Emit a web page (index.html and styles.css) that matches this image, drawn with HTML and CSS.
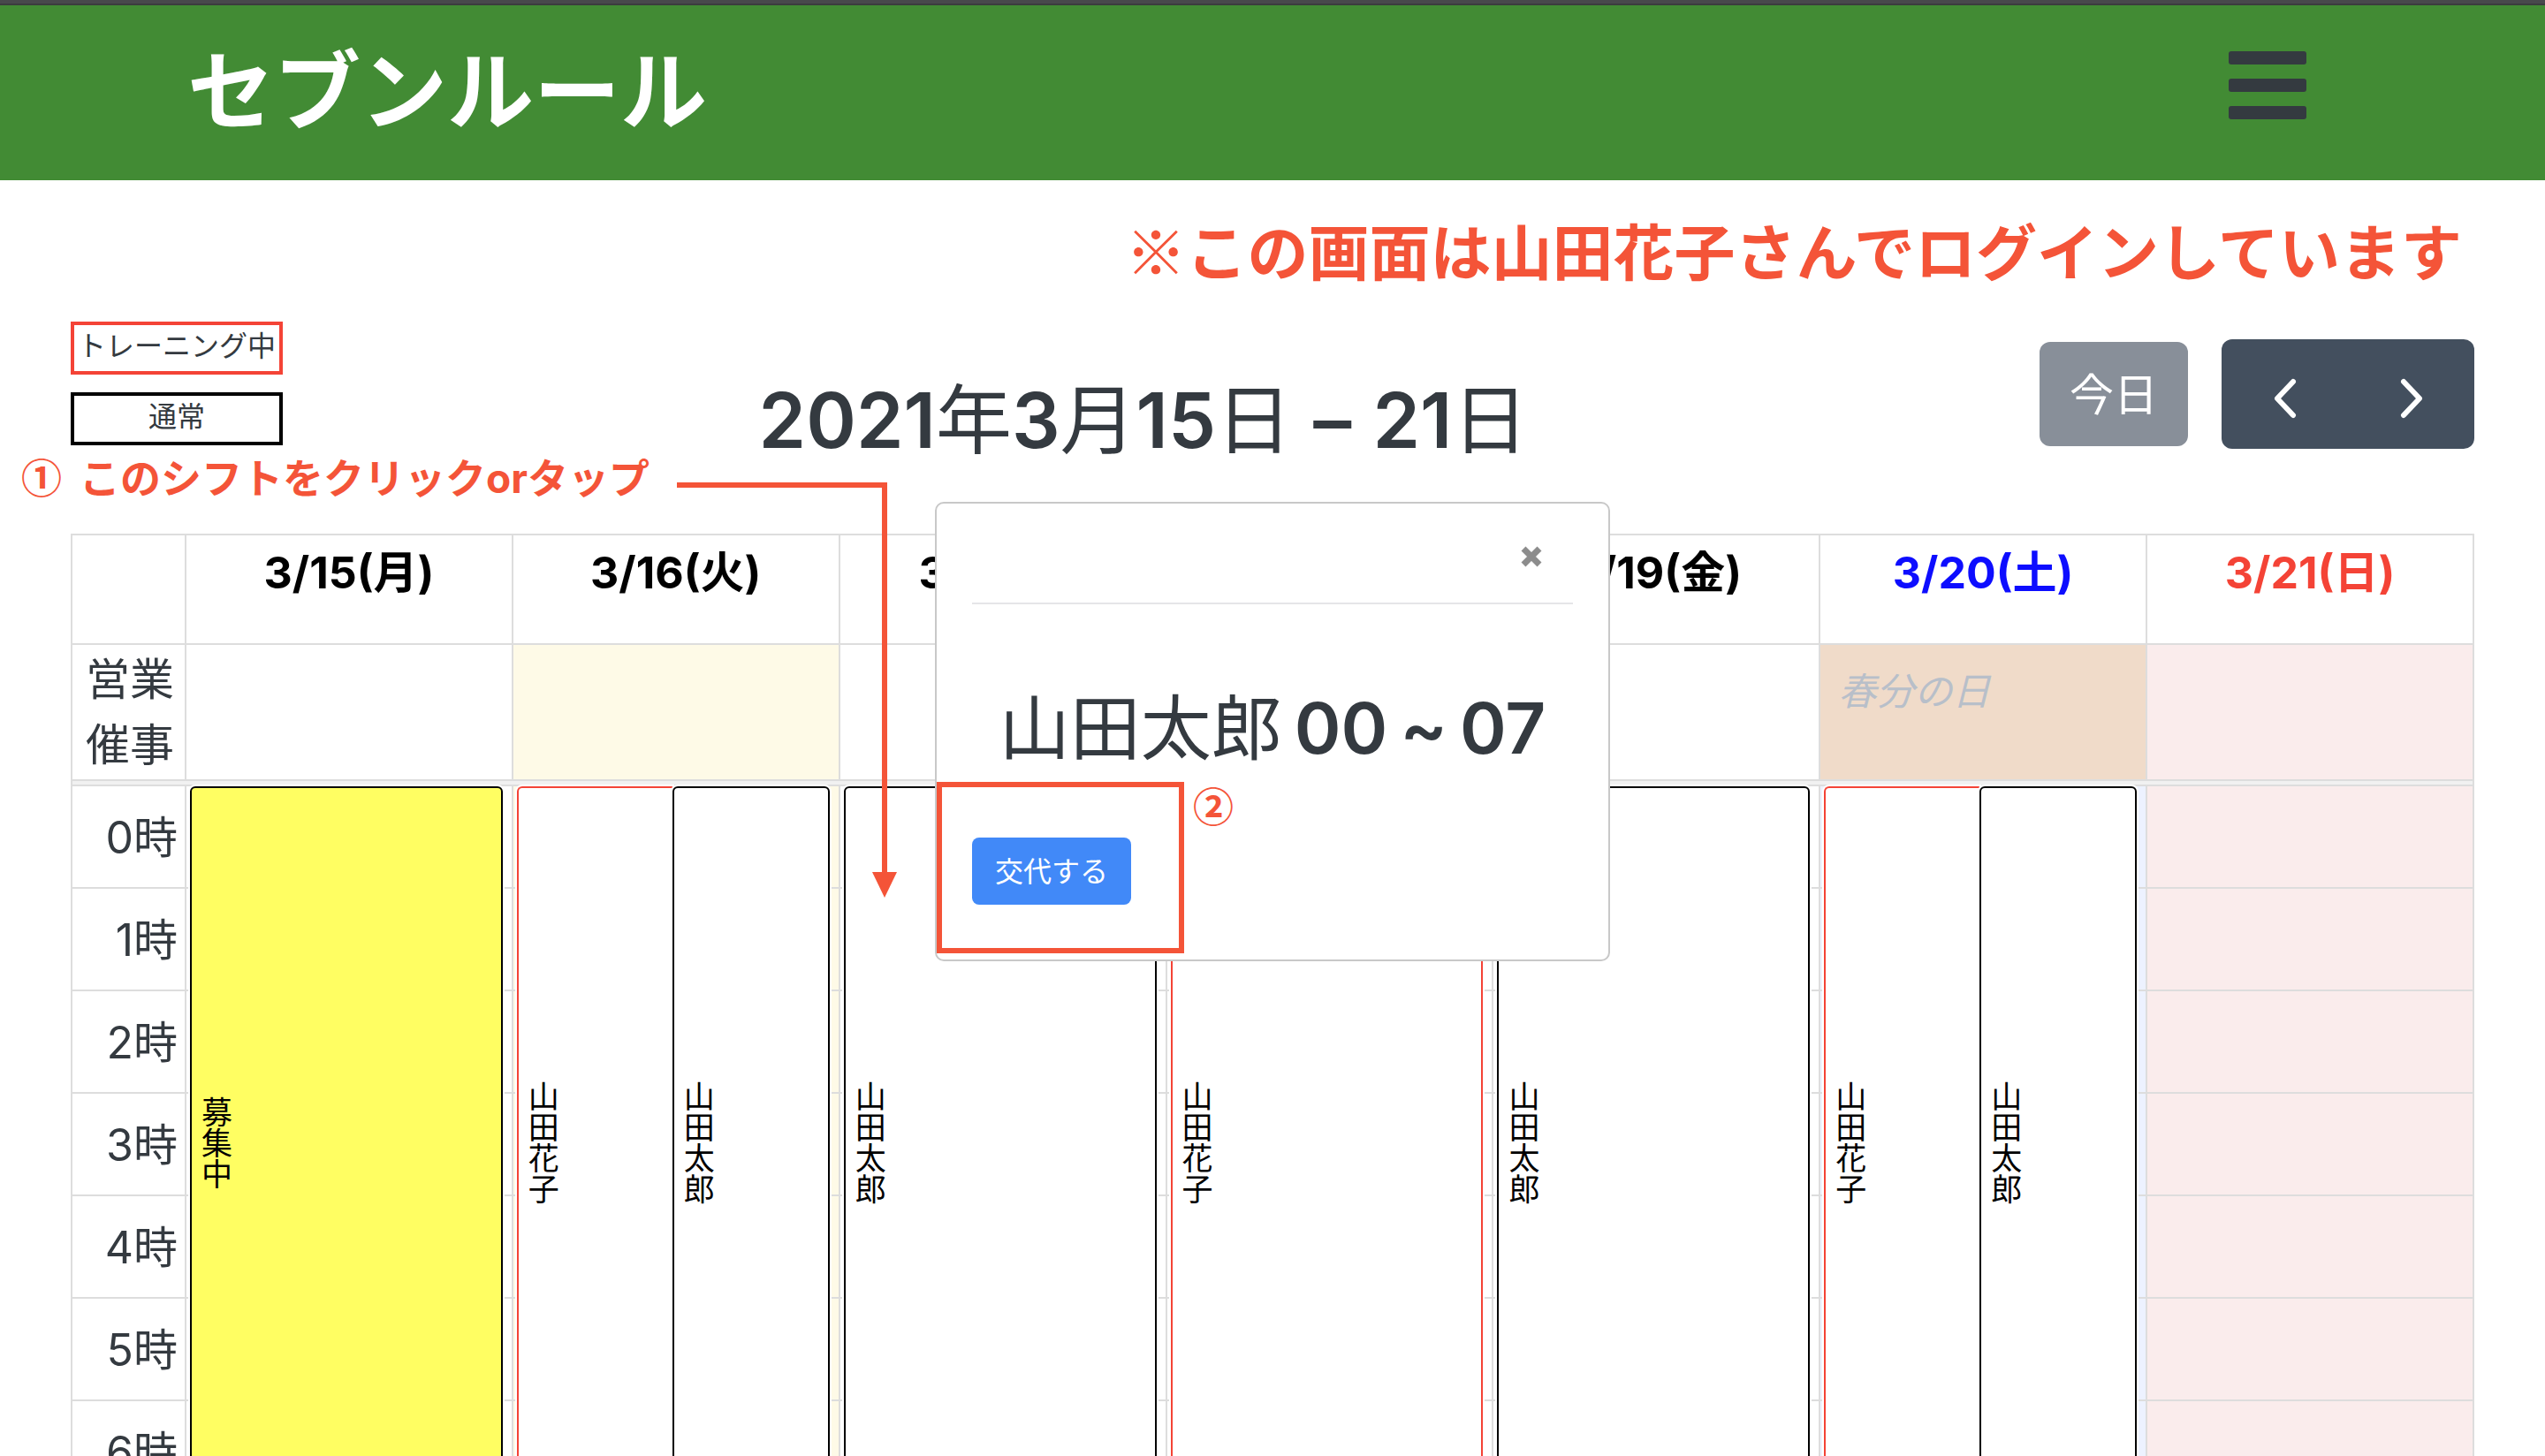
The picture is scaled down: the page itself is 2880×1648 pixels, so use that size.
FILE: index.html
```html
<!DOCTYPE html>
<html lang="ja">
<head>
<meta charset="utf-8">
<title>セブンルール</title>
<link rel="stylesheet" href="styles.css">
</head>
<body>
<header class="site-header">
  <h1 class="site-title">セブンルール</h1>
  <button class="menu-button" type="button" aria-label="メニュー">
    <svg width="88" height="78" viewBox="0 0 88 78" fill="#343a40" aria-hidden="true">
      <rect x="0" y="0" width="88" height="15" rx="3"/>
      <rect x="0" y="31" width="88" height="15" rx="3"/>
      <rect x="0" y="62" width="88" height="15" rx="3"/>
    </svg>
  </button>
</header>

<main class="page">
  <p class="login-note">※この画面は山田花子さんでログインしています</p>

  <div class="toolbar">
    <ul class="legend">
      <li class="legend-item legend-training">トレーニング中</li>
      <li class="legend-item">通常</li>
    </ul>
    <h2 class="range-title"><b>2021</b>年<b>3</b>月<b>15</b>日 <b>–</b> <b>21</b>日</h2>
    <div class="toolbar-buttons">
      <button class="today-button" type="button" disabled>今日</button>
      <div class="nav-group">
        <button class="nav-button" type="button" aria-label="前の週">
          <svg width="26" height="46" viewBox="0 0 26 46" aria-hidden="true"><path d="M22 4 4 23l18 19"/></svg>
        </button>
        <button class="nav-button" type="button" aria-label="次の週">
          <svg width="26" height="46" viewBox="0 0 26 46" aria-hidden="true"><path d="M4 4l18 19L4 42"/></svg>
        </button>
      </div>
    </div>
  </div>

  <p class="step-note"><span class="step-mark">①</span>このシフトをクリックorタップ</p>

  <div class="calendar-wrap">
    <table class="calendar">
      <colgroup><col class="axis-col"><col><col><col><col><col><col><col></colgroup>
      <thead>
        <tr class="day-row">
          <th></th>
          <th scope="col">3/15(月)</th>
          <th scope="col">3/16(火)</th>
          <th scope="col">3/17(水)</th>
          <th scope="col">3/18(木)</th>
          <th scope="col">3/19(金)</th>
          <th scope="col" class="saturday">3/20(土)</th>
          <th scope="col" class="sunday">3/21(日)</th>
        </tr>
      </thead>
      <tbody>
        <tr class="allday-row">
          <th scope="row">営業<br>催事</th>
          <td></td><td class="bg-today"></td><td></td><td></td><td></td>
          <td class="bg-holiday">春分の日</td><td class="bg-sun"></td>
        </tr>
        <tr class="divider-row"><td colspan="8"></td></tr>
        <tr class="slot-row">
          <th scope="row">0時</th>
          <td><div class="shifts"><div class="shift shift-open">募集中</div></div></td>
          <td class="bg-today"><div class="shifts"><div class="shift shift-training">山田花子</div><div class="shift">山田太郎</div></div></td>
          <td><div class="shifts"><div class="shift">山田太郎</div></div></td>
          <td><div class="shifts"><div class="shift shift-training">山田花子</div></div></td>
          <td><div class="shifts"><div class="shift">山田太郎</div></div></td>
          <td class="bg-sat"><div class="shifts"><div class="shift shift-training">山田花子</div><div class="shift">山田太郎</div></div></td>
          <td class="bg-sun"></td>
        </tr>
        <tr class="slot-row"><th scope="row">1時</th><td></td><td class="bg-today"></td><td></td><td></td><td></td><td class="bg-sat"></td><td class="bg-sun"></td></tr>
        <tr class="slot-row"><th scope="row">2時</th><td></td><td class="bg-today"></td><td></td><td></td><td></td><td class="bg-sat"></td><td class="bg-sun"></td></tr>
        <tr class="slot-row"><th scope="row">3時</th><td></td><td class="bg-today"></td><td></td><td></td><td></td><td class="bg-sat"></td><td class="bg-sun"></td></tr>
        <tr class="slot-row"><th scope="row">4時</th><td></td><td class="bg-today"></td><td></td><td></td><td></td><td class="bg-sat"></td><td class="bg-sun"></td></tr>
        <tr class="slot-row"><th scope="row">5時</th><td></td><td class="bg-today"></td><td></td><td></td><td></td><td class="bg-sat"></td><td class="bg-sun"></td></tr>
        <tr class="slot-row"><th scope="row">6時</th><td></td><td class="bg-today"></td><td></td><td></td><td></td><td class="bg-sat"></td><td class="bg-sun"></td></tr>
      </tbody>
    </table>
  </div>
</main>

<section class="modal" role="dialog" aria-labelledby="shift-name">
  <div class="modal-header">
    <button class="close-button" type="button" aria-label="閉じる">
      <svg width="24" height="24" viewBox="0 0 24 24" aria-hidden="true"><path d="M3 3l18 18M21 3 3 21"/></svg>
    </button>
  </div>
  <h2 class="modal-title" id="shift-name"><span>山田太郎</span><b>00</b><b>~</b><b>07</b></h2>
  <button class="swap-button" type="button">交代する</button>
  <div class="step-frame"></div>
  <span class="step-mark step-number">②</span>
</section>

<svg class="step-arrow" width="250" height="472" viewBox="0 0 250 472" aria-hidden="true">
  <path d="M0 4H235V442" fill="none" stroke="#f45438" stroke-width="6"/>
  <path d="M221 442h28l-14 29z" fill="#f45438"/>
</svg>
</body>
</html>
```
FILE: styles.css
```css
* {
  box-sizing: border-box;
}

body {
  position: relative;
  display: flex;
  flex-direction: column;
  height: 100vh;
  margin: 0;
  overflow: hidden;
  background: #fff;
  color: #343a40;
  font-family: Inter, "Noto Sans CJK JP", sans-serif;
  font-size: 32px;
}

h1,
h2,
p,
ul {
  margin: 0;
  padding: 0;
}

button {
  padding: 0;
  border: 0;
  font-family: inherit;
}

.site-header {
  display: flex;
  flex: none;
  align-items: flex-start;
  justify-content: space-between;
  height: 204px;
  padding: 28px 270px 0 212px;
  border-top: 4px solid #48484c;
  background: #428b34;
  box-shadow: inset 0 2px #3c3c3e;
}

.site-title {
  color: #fff;
  font-size: 98px;
  font-weight: 700;
  line-height: 144px;
}

.menu-button {
  margin-top: 26px;
  background: none;
}

.menu-button svg {
  display: block;
}

.page {
  display: flex;
  flex: 1;
  flex-direction: column;
  min-height: 0;
}

.login-note {
  padding: 28px 94px 32px;
  color: #f45438;
  font-family: "Noto Sans CJK JP", sans-serif;
  font-size: 69px;
  font-weight: 700;
  line-height: 100px;
  text-align: right;
}

.toolbar {
  display: flex;
  align-items: flex-start;
  height: 140px;
  padding: 0 80px;
}

.legend {
  display: flex;
  flex-direction: column;
  gap: 20px;
  width: 240px;
  list-style: none;
}

.legend-item {
  height: 60px;
  border: 4px solid #000;
  line-height: 48px;
  text-align: center;
  white-space: nowrap;
}

.legend-training {
  border-color: #f44336;
}

.range-title {
  flex: 1;
  padding: 60px 40px 0 0;
  font-size: 86px;
  font-weight: 400;
  line-height: 104px;
  text-align: center;
}

.range-title b,
.modal-title b {
  font-weight: 600;
}

.toolbar-buttons {
  display: flex;
  align-items: center;
  gap: 38px;
  padding-top: 20px;
}

.today-button {
  width: 168px;
  height: 118px;
  padding-bottom: 6px;
  border-radius: 12px;
  background: #888f99;
  color: #fff;
  font-size: 50px;
}

.nav-group {
  display: flex;
  width: 286px;
  height: 124px;
  overflow: hidden;
  border-radius: 12px;
  background: #434f5e;
}

.nav-button {
  display: flex;
  flex: 1;
  align-items: center;
  justify-content: center;
  padding-top: 10px;
  background: none;
}

.nav-button path {
  fill: none;
  stroke: #fff;
  stroke-width: 6;
  stroke-linecap: round;
  stroke-linejoin: round;
}

.step-note {
  display: flex;
  gap: 20px;
  height: 100px;
  padding-left: 24px;
  color: #f45438;
  font-size: 46px;
  font-weight: 700;
  line-height: 74px;
}

.step-mark {
  font-family: "Noto Sans CJK JP", sans-serif;
  line-height: 68px;
}

.calendar-wrap {
  flex: 1;
  min-height: 0;
  padding: 0 80px;
  overflow: hidden;
}

.calendar {
  width: 100%;
  border-collapse: collapse;
  table-layout: fixed;
}

.axis-col {
  width: 129px;
}

.calendar th,
.calendar td {
  padding: 0;
  border: 2px solid #ddd;
}

.calendar tbody th {
  padding: 0 8px 6px 0;
  font-size: 50px;
  font-weight: 400;
  text-align: right;
}

.day-row th {
  height: 124px;
  color: #000;
  font-size: 50px;
  font-weight: 700;
  line-height: 72px;
  vertical-align: top;
}

.calendar .day-row th {
  padding-top: 6px;
}

.day-row .saturday {
  color: #0d0dff;
}

.day-row .sunday {
  color: #f44336;
}

.allday-row {
  height: 154px;
}

.calendar .allday-row th {
  padding: 0 12px 0 0;
  line-height: 74px;
}

.divider-row td {
  height: 6px;
  background: #f1f1f1;
}

.slot-row {
  height: 116px;
}

.slot-row td {
  position: relative;
}

.bg-today {
  background: #fefae7;
}

.bg-sat {
  background: #edf2ff;
}

.bg-sun {
  background: #faecec;
}

.calendar .bg-holiday {
  padding: 20px 20px 0;
  background: #f0dbc9;
  color: #b8bfc9;
  font-size: 43px;
  font-style: italic;
  line-height: 64px;
  vertical-align: top;
}

/* Shifts hang from the 0時 cell and cover seven hourly rows. */
.shifts {
  position: absolute;
  z-index: 1;
  top: 0;
  right: 10px;
  left: 4px;
  display: flex;
  height: calc(7 * 116px);
}

.shift {
  display: flex;
  flex: 1;
  flex-direction: column;
  align-items: center;
  justify-content: flex-end;
  padding: 0 6px 6px;
  border: 2px solid #000;
  border-radius: 6px;
  background: #fff;
  box-shadow: 0 0 0 2px #fff;
  color: #000;
  font-size: 35px;
  line-height: 40px;
  writing-mode: vertical-rl;
}

.shift:not(:last-child) {
  border-right: 0;
  border-top-right-radius: 0;
}

.shift-training {
  border-color: #f44336;
}

.shift-open {
  background: #fffe62;
}

.modal {
  position: absolute;
  z-index: 2;
  top: 568px;
  right: 0;
  left: 0;
  width: 764px;
  margin: 0 auto;
  padding: 0 40px 62px;
  border: 2px solid #c8c8c8;
  border-radius: 10px;
  background: #fff;
}

.modal-header {
  display: flex;
  align-items: center;
  justify-content: flex-end;
  height: 114px;
  padding: 8px 35px 0 0;
  border-bottom: 2px solid #e5e5e8;
}

.close-button {
  background: none;
}

.close-button svg {
  display: block;
}

.close-button path {
  stroke: #8c8c8c;
  stroke-width: 7;
}

.modal-title {
  display: flex;
  justify-content: center;
  gap: 14px;
  margin: 92px 0 76px;
  font-size: 80px;
  font-weight: 400;
  line-height: 96px;
  white-space: nowrap;
}

.swap-button {
  display: block;
  width: 180px;
  height: 76px;
  padding-bottom: 4px;
  border-radius: 8px;
  background: #4189f8;
  color: #fff;
  font-size: 32px;
}

.step-frame {
  position: absolute;
  bottom: 7px;
  left: 0;
  width: 280px;
  height: 194px;
  border: 6px solid #f45438;
}

.step-number {
  position: absolute;
  top: 306px;
  left: 290px;
  color: #f45438;
  font-size: 46px;
  font-weight: 700;
}

.step-arrow {
  position: absolute;
  z-index: 3;
  top: 545px;
  left: 766px;
}
```
